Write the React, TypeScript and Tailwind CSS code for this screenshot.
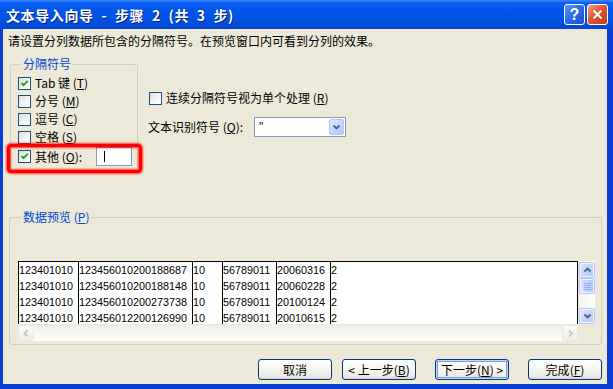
import React from 'react';

const U = ({ c }: { c: string }) => (
  <>
    (<span className="underline">{c}</span>)
  </>
);

const rows = [
  ['123401010', '123456010200188687', '10', '56789011', '20060316', '2'],
  ['123401010', '123456010200188148', '10', '56789011', '20060228', '2'],
  ['123401010', '123456010200273738', '10', '56789011', '20100124', '2'],
  ['123401010', '123456012200126990', '10', '56789011', '20010615', '2'],
];

const colClasses = [
  'w-[60px] border-r border-black',
  'w-[114px] border-r border-black',
  'w-[30px] border-r border-black',
  'w-[54px] border-r border-black',
  'w-[54px] border-r border-black',
  'flex-1',
];

function CheckBox({ checked }: { checked?: boolean }) {
  return (
    <span className="w-[13px] h-[13px] shrink-0 border border-[#1C5180] bg-[linear-gradient(135deg,#DCDCD7_0%,#F4F4F0_55%,#FFFFFF_100%)] flex items-center justify-center">
      {checked && (
        <svg width="9" height="9" viewBox="0 0 9 9">
          <path d="M1.5 4 L3.5 6.2 L7.8 1.8" stroke="#21A121" strokeWidth="1.9" fill="none" />
        </svg>
      )}
    </span>
  );
}

function Arrow({ dir, color }: { dir: 'up' | 'down' | 'left' | 'right'; color: string }) {
  const d = {
    up: 'M1.5 5.5 L4.5 2.5 L7.5 5.5',
    down: 'M1.5 2.5 L4.5 5.5 L7.5 2.5',
    left: 'M5.5 1.5 L2.5 4.5 L5.5 7.5',
    right: 'M3 1.5 L6 4.5 L3 7.5',
  }[dir];
  return (
    <svg width="9" height="9" viewBox="0 0 9 9">
      <path d={d} stroke={color} strokeWidth="1.8" fill="none" />
    </svg>
  );
}

function ScrollBtn({ dir, disabled }: { dir: 'up' | 'down' | 'left' | 'right'; disabled?: boolean }) {
  return disabled ? (
    <div className="w-[16px] h-[16px] shrink-0 rounded-[2px] border border-[#E9E8E0] bg-[linear-gradient(180deg,#FAFAF7_0%,#EFEEE8_100%)] flex items-center justify-center">
      <Arrow dir={dir} color="#C9C8BD" />
    </div>
  ) : (
    <div className="w-[16px] h-[16px] shrink-0 rounded-[2px] border border-[#B4C8F6] bg-[linear-gradient(135deg,#DCE6FD_0%,#C5D5FC_50%,#B4C8F6_100%)] shadow-[inset_0_0_0_1px_#EEF3FF] flex items-center justify-center">
      <Arrow dir={dir} color="#4D6185" />
    </div>
  );
}

function XpButton({ children, focused }: { children: React.ReactNode; focused?: boolean }) {
  return (
    <button
      className={
        focused
          ? 'h-[21px] w-[74px] rounded-[3px] border border-[#003C74] bg-[linear-gradient(180deg,#FFFFFF_0%,#F4F4F0_50%,#ECEBE6_85%,#D6D0C5_100%)] shadow-[inset_0_0_0_1px_#C4D8F8,inset_0_0_0_2px_#7C9BE8] text-[12px] leading-[12px] text-black flex items-center justify-center'
          : 'h-[21px] w-[74px] rounded-[3px] border border-[#003C74] bg-[linear-gradient(180deg,#FFFFFF_0%,#F4F4F0_50%,#ECEBE6_85%,#D6D0C5_100%)] text-[12px] leading-[12px] text-black flex items-center justify-center'
      }
    >
      {children}
    </button>
  );
}

export default function App() {
  return (
    <div className="w-[613px] h-[389px] flex flex-col bg-[#0A3FD4] font-['Noto_Sans_CJK_SC','Liberation_Sans',sans-serif] select-none">
      {/* Title bar */}
      <div className="h-[29px] shrink-0 flex items-center justify-between pl-[6px] pr-[5px] bg-[linear-gradient(180deg,#3A8CFF_0px,#0A5DF0_3px,#0056E8_10px,#0053E2_70%,#0349D6_90%,#0844D0_100%)]">
        <span className="text-white font-bold text-[14px] leading-[14px] tracking-[0.6px] [word-spacing:4px] [text-shadow:1px_1px_0_#0A1E8A] whitespace-pre">
          文本导入向导 - 步骤 2 (共 3 步)
        </span>
        <div className="flex items-center gap-[2px]">
          <div className="w-[21px] h-[21px] rounded-[3px] border border-white bg-[linear-gradient(135deg,#5A98FC_0%,#2A68EE_50%,#1B50D8_100%)] flex items-center justify-center">
            <span className="text-white font-bold text-[16px] leading-[16px] font-['Liberation_Sans',sans-serif]">?</span>
          </div>
          <div className="w-[21px] h-[21px] rounded-[3px] border border-white bg-[linear-gradient(135deg,#F0A088_0%,#E0572E_45%,#C73E18_100%)] flex items-center justify-center">
            <svg width="11" height="11" viewBox="0 0 11 11">
              <path d="M1.5 1.5 L9.5 9.5 M9.5 1.5 L1.5 9.5" stroke="white" strokeWidth="2" />
            </svg>
          </div>
        </div>
      </div>

      {/* Body */}
      <div className="relative flex-1 ml-[3px] mr-[6px] mb-[5px] bg-[#ECE9D8] flex flex-col text-black text-[12px]">
        <div className="pt-[6px] pl-[5px] leading-[12px]">
          请设置分列数据所包含的分隔符号。在预览窗口内可看到分列的效果。
        </div>

        <div className="mt-[11px] flex items-start">
          <fieldset className="ml-[7px] w-[128px] border border-[#D0D0BF] rounded-[3px] pt-[4px] pb-[5px] pl-[7px]">
            <legend className="ml-[3px] px-[2px] text-[#0046D5] leading-[12px]">分隔符号</legend>
            <div className="h-[18px] flex items-center gap-[4px]">
              <CheckBox checked />
              <span className="leading-[12px]">
                Tab 键 <U c="T" />
              </span>
            </div>
            <div className="h-[18px] flex items-center gap-[4px]">
              <CheckBox />
              <span className="leading-[12px]">
                分号 <U c="M" />
              </span>
            </div>
            <div className="h-[18px] flex items-center gap-[4px]">
              <CheckBox />
              <span className="leading-[12px]">
                逗号 <U c="C" />
              </span>
            </div>
            <div className="h-[18px] flex items-center gap-[4px]">
              <CheckBox />
              <span className="leading-[12px]">
                空格 <U c="S" />
              </span>
            </div>
            <div className="mt-[1px] h-[19px] flex items-center gap-[4px]">
              <CheckBox checked />
              <span className="w-[57px] leading-[12px]">
                其他 <U c="O" />:
              </span>
              <div className="w-[36px] h-[19px] border border-[#7F9DB9] bg-white flex items-center pl-[7px]">
                <span className="w-[1px] h-[11px] bg-black" />
              </div>
            </div>
          </fieldset>

          <div className="ml-[11px] flex flex-col">
            <div className="mt-[31px] h-[18px] flex items-center gap-[4px]">
              <CheckBox />
              <span className="leading-[12px]">
                连续分隔符号视为单个处理 <U c="R" />
              </span>
            </div>
            <div className="mt-[10px] -ml-[1px] h-[20px] flex items-center">
              <span className="w-[106px] leading-[12px]">
                文本识别符号 <U c="Q" />:
              </span>
              <div className="w-[92px] h-[20px] border border-[#7F9DB9] bg-white flex items-center justify-between p-[1px]">
                <span className="pl-[3px] leading-[12px] font-['Liberation_Sans',sans-serif] text-[12px]">"</span>
                <div className="w-[15px] h-[16px] rounded-[2px] border border-[#B4C8F6] bg-[linear-gradient(135deg,#DCE6FD_0%,#C5D5FC_50%,#B4C8F6_100%)] flex items-center justify-center">
                  <Arrow dir="down" color="#4D6185" />
                </div>
              </div>
            </div>
          </div>
        </div>

        <fieldset className="mt-[37px] ml-[6px] mr-[5px] border border-[#D0D0BF] rounded-[3px] pt-[36px] pb-[3px] pl-[8px]">
          <legend className="ml-[3px] px-[2px] text-[#0046D5] leading-[16px]">
            数据预览 <U c="P" />
          </legend>
          <div className="flex">
            <div className="flex flex-col">
              <div className="w-[560px] h-[63px] border-t border-x border-black bg-white flex overflow-hidden font-['Liberation_Sans',sans-serif] text-[10.8px] leading-[16px]">
                {colClasses.map((cls, ci) => (
                  <div key={ci} className={cls}>
                    {rows.map((r, ri) => (
                      <div key={ri} className="h-[16px] whitespace-pre">
                        {r[ci]}
                      </div>
                    ))}
                  </div>
                ))}
              </div>
              <div className="mt-[1px] w-[560px] h-[16px] flex justify-between bg-[linear-gradient(180deg,#EEEDE5_0%,#F7F6F1_50%,#FEFEFC_100%)]">
                <ScrollBtn dir="left" disabled />
                <ScrollBtn dir="right" disabled />
              </div>
            </div>
            <div className="ml-[1px] w-[16px] h-[63px] pt-[1px] flex flex-col bg-[linear-gradient(90deg,#F3F1EC_0%,#FEFEFB_100%)]">
              <ScrollBtn dir="up" />
              <div className="w-[16px] h-[16px] rounded-[2px] border border-[#B4C8F6] bg-[linear-gradient(90deg,#DCE6FD_0%,#C5D5FC_50%,#B4C8F6_100%)] shadow-[inset_0_0_0_1px_#EEF3FF] flex flex-col items-center justify-center gap-[1px]">
                <span className="w-[7px] h-[1px] bg-[#8CB0F8]" />
                <span className="w-[7px] h-[1px] bg-[#8CB0F8]" />
                <span className="w-[7px] h-[1px] bg-[#8CB0F8]" />
                <span className="w-[7px] h-[1px] bg-[#8CB0F8]" />
              </div>
              <div className="flex-1" />
              <ScrollBtn dir="down" />
            </div>
          </div>
        </fieldset>

        <div className="mt-[14px] pr-[5px] flex justify-end">
          <XpButton>取消</XpButton>
          <div className="ml-[10px]">
            <XpButton>
              &lt; 上一步<U c="B" />
            </XpButton>
          </div>
          <div className="ml-[19px]">
            <XpButton focused>
              下一步<U c="N" /> &gt;
            </XpButton>
          </div>
          <div className="ml-[19px]">
            <XpButton>
              完成<U c="F" />
            </XpButton>
          </div>
        </div>

        {/* red annotation */}
        <div className="absolute left-[4px] top-[115px] w-[135px] h-[29px] rounded-[4px] border-[3px] border-[#FF0000] shadow-[0_0_2px_1px_rgba(255,0,0,0.75),inset_0_0_2px_1px_rgba(255,0,0,0.75)]" />
      </div>
    </div>
  );
}
